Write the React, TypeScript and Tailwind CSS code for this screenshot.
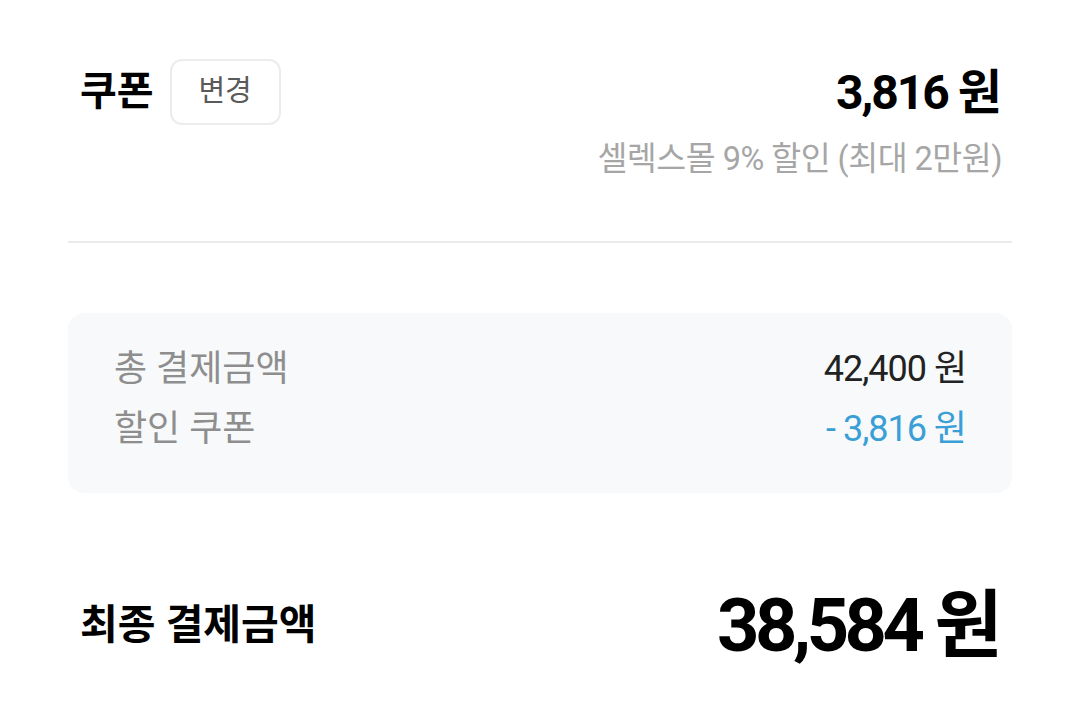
import React from "react";

const font = { fontFamily: "Roboto, 'Noto Sans CJK KR', sans-serif" };

const App: React.FC = () => {
  return (
    <div className="w-[1080px] h-[706px] bg-white overflow-hidden" style={font}>
      {/* Coupon */}
      <section className="px-[68px] pt-[59px]">
        <div className="flex justify-between items-start px-3">
          <div className="flex items-center gap-4">
            <span className="text-[40px] font-bold text-black leading-none">쿠폰</span>
            <button className="w-[111px] h-[66px] rounded-xl border-2 border-[#ececec] text-[29px] text-[#5a5a5a] bg-white">
              변경
            </button>
          </div>
          <div className="flex flex-col items-end">
            <span className="text-[48px] font-bold text-black leading-none tracking-[-2px] mt-[10px]">
              3,816 원
            </span>
            <span className="text-[32.5px] text-[#a6a6a6] leading-none tracking-[-0.5px] mt-[26px] mr-[-2px]">
              셀렉스몰 9% 할인 (최대 2만원)
            </span>
          </div>
        </div>
        <div className="h-[2px] bg-[#ebebeb] mt-[65px]" />
      </section>

      {/* Summary */}
      <section className="px-[68px] mt-[70px]">
        <div className="bg-[#f7f9fa] rounded-2xl h-[180px] px-[46px] pt-[36px] flex flex-col gap-[20px]">
          <div className="flex justify-between items-center">
            <span className="text-[36px] text-[#8e8e8e] leading-10">총 결제금액</span>
            <span className="text-[36px] text-[#222] leading-10 tracking-[-1px]">42,400 원</span>
          </div>
          <div className="flex justify-between items-center">
            <span className="text-[36px] text-[#8e8e8e] leading-10">할인 쿠폰</span>
            <span className="text-[36px] text-[#3a9fd6] leading-10 tracking-[-1px]">- 3,816 원</span>
          </div>
        </div>
      </section>

      {/* Final */}
      <section className="px-[80px] mt-[96px] flex justify-between items-center">
        <span className="text-[41px] font-bold text-black">최종 결제금액</span>
        <span className="text-[74px] font-bold text-black leading-none tracking-[-4.5px] mr-[2px]">
          38,584 원
        </span>
      </section>
    </div>
  );
};

export default App;
